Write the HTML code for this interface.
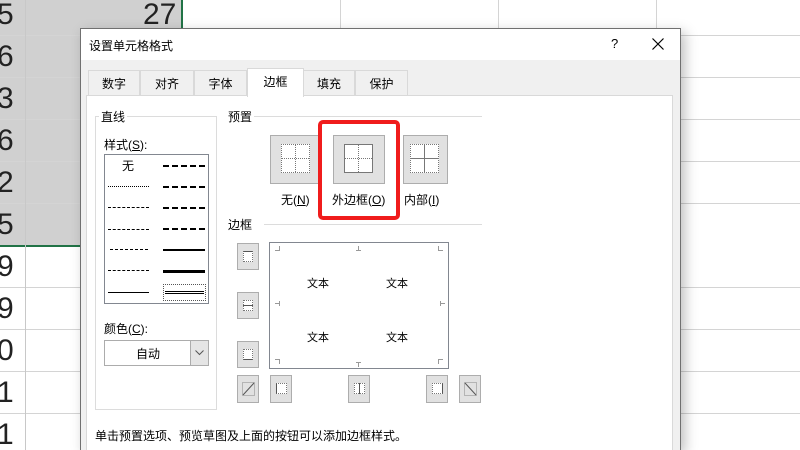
<!DOCTYPE html>
<html style="width:800px;height:450px;overflow:hidden"><head><meta charset="utf-8"><style>
*{margin:0;padding:0;box-sizing:border-box}
body{width:800px;height:450px;overflow:hidden;background:#fff;position:relative;font-family:"Liberation Sans","Noto Sans CJK SC",sans-serif;font-size:12px;color:#000}
.a{position:absolute}
.hl{position:absolute;left:0;width:800px;height:1px;background:#d4d4d4}
.num{position:absolute;font-size:30px;color:#222;line-height:42px}
.btn{position:absolute;background:#e1e1e1;border:1px solid #adadad}
.dot{position:absolute;border:1px dotted #777;background:#fff}
.lst{position:absolute;height:0}
.cm{position:absolute;width:5px;height:5px;border-color:#999;border-style:solid;border-width:0}
</style></head><body>
<div class="a" style="left:0;top:0;width:182px;height:246px;background:#d0d0d0"></div>
<div class="hl" style="top:35px"></div><div class="hl" style="top:77px"></div><div class="hl" style="top:119px"></div><div class="hl" style="top:161px"></div><div class="hl" style="top:203px"></div>
<div class="hl" style="top:287px"></div><div class="hl" style="top:329px"></div><div class="hl" style="top:371px"></div><div class="hl" style="top:413px"></div>
<div class="a" style="left:0;top:245px;width:182px;height:2px;background:#217346"></div>
<div class="a" style="left:181px;top:0;width:2px;height:247px;background:#217346"></div>
<div class="a" style="left:25px;top:0;width:1px;height:450px;background:#c8c8c8"></div>
<div class="a" style="left:340px;top:0;width:1px;height:30px;background:#d4d4d4"></div>
<div class="a" style="left:498px;top:0;width:1px;height:30px;background:#d4d4d4"></div>
<div class="a" style="left:656px;top:0;width:1px;height:30px;background:#d4d4d4"></div>
<div class="num" style="left:-3px;top:-6px">5</div><div class="num" style="left:-3px;top:36px">6</div><div class="num" style="left:-3px;top:78px">3</div><div class="num" style="left:-3px;top:120px">6</div><div class="num" style="left:-3px;top:162px">2</div><div class="num" style="left:-3px;top:204px">5</div><div class="num" style="left:-3px;top:246px">9</div><div class="num" style="left:-3px;top:288px">9</div><div class="num" style="left:-3px;top:330px">0</div><div class="num" style="left:-3px;top:372px">1</div><div class="num" style="left:-3px;top:414px">1</div>
<div class="num" style="left:143px;top:-6px">27</div>
<div class="a" style="left:80px;top:28px;width:601px;height:422px;background:#f0f0f0;border:1px solid #707070;border-bottom:none;box-shadow:4px 4px 12px rgba(0,0,0,.25)">
<div class="a" style="left:0;top:0;width:599px;height:31px;background:#fff"></div>
<div class="a" style="left:8px;top:8px;font-size:12px">设置单元格格式</div>
<div class="a" style="left:530px;top:7px;font-size:13px">?</div>
<svg class="a" style="left:571px;top:9px" width="12" height="12"><path d="M0.5 0.5L11.5 11.5M11.5 0.5L0.5 11.5" stroke="#000" stroke-width="1.2"/></svg>
</div>
<div class="a" style="left:88px;top:70px;width:52px;height:26px;border:1px solid #d9d9d9;border-bottom:none;text-align:center;line-height:26px;font-size:12px">数字</div>
<div class="a" style="left:140px;top:70px;width:54px;height:26px;border:1px solid #d9d9d9;border-bottom:none;text-align:center;line-height:26px">对齐</div>
<div class="a" style="left:194px;top:70px;width:53px;height:26px;border:1px solid #d9d9d9;border-bottom:none;text-align:center;line-height:26px">字体</div>
<div class="a" style="left:303px;top:70px;width:52px;height:26px;border:1px solid #d9d9d9;border-bottom:none;text-align:center;line-height:26px">填充</div>
<div class="a" style="left:355px;top:70px;width:53px;height:26px;border:1px solid #d9d9d9;border-bottom:none;text-align:center;line-height:26px">保护</div>
<div class="a" style="left:86px;top:95px;width:587px;height:355px;background:#fff;border:1px solid #d9d9d9;border-bottom:none"></div>
<div class="a" style="left:247px;top:68px;width:57px;height:29px;background:#fff;border:1px solid #d9d9d9;border-bottom:none;text-align:center;line-height:27px">边框</div>
<div class="a" style="left:95px;top:116px;width:122px;height:294px;border:1px solid #dcdcdc"></div>
<div class="a" style="left:99px;top:108px;background:#fff;padding:0 2px">直线</div>
<div class="a" style="left:104px;top:136px">样式(<u>S</u>):</div>
<div class="a" style="left:104px;top:154px;width:105px;height:150px;border:1px solid #828790"></div>
<div class="a" style="left:122px;top:157px">无</div>
<div class="lst" style="left:108px;top:186px;width:41px;border-top:1px dotted #000"></div>
<div class="lst" style="left:108px;top:207px;width:41px;border-top:1px dashed #000"></div>
<div class="lst" style="left:108px;top:229px;width:41px;border-top:1px dashed #000"></div>
<div class="lst" style="left:110px;top:249px;width:38px;border-top:1px dashed #000"></div>
<div class="lst" style="left:108px;top:270px;width:41px;border-top:1px dashed #000"></div>
<div class="lst" style="left:108px;top:292px;width:41px;border-top:1px solid #000"></div>
<div class="lst" style="left:163px;top:165px;width:42px;border-top:2px dashed #000"></div>
<div class="lst" style="left:163px;top:186px;width:42px;border-top:2px dashed #000"></div>
<div class="lst" style="left:163px;top:207px;width:42px;border-top:2px dashed #000"></div>
<div class="lst" style="left:163px;top:228px;width:42px;border-top:2px dashed #000"></div>
<div class="lst" style="left:163px;top:249px;width:42px;border-top:2px solid #000"></div>
<div class="lst" style="left:163px;top:270px;width:42px;border-top:3px solid #000"></div>
<div class="a" style="left:163px;top:284px;width:43px;height:17px;border:1px dotted #555"></div>
<div class="lst" style="left:165px;top:291px;width:39px;height:3px;border-top:1px solid #000;border-bottom:1px solid #000"></div>
<div class="a" style="left:104px;top:320px">颜色(<u>C</u>):</div>
<div class="a" style="left:104px;top:340px;width:105px;height:26px;border:1px solid #acacac;background:#fff"></div>
<div class="a" style="left:136px;top:345px">自动</div>
<div class="a" style="left:190px;top:341px;width:18px;height:24px;background:#e5e5e5;border-left:1px solid #acacac"></div>
<svg class="a" style="left:195px;top:350px" width="9" height="6"><path d="M0.5 0.5L4.5 4.5L8.5 0.5" stroke="#555" fill="none"/></svg>
<div class="a" style="left:254px;top:116px;width:228px;height:1px;background:#dcdcdc"></div>
<div class="a" style="left:226px;top:108px;background:#fff;padding:0 2px">预置</div>
<div class="btn" style="left:270px;top:135px;width:50px;height:49px"><div class="dot" style="left:10px;top:8px;width:29px;height:29px"></div><div class="a" style="left:24px;top:9px;height:27px;border-left:1px dotted #777"></div><div class="a" style="left:11px;top:22px;width:27px;border-top:1px dotted #777"></div></div>
<div class="btn" style="left:333px;top:135px;width:52px;height:49px"><div class="a" style="left:10px;top:8px;width:29px;height:29px;border:1px solid #777;background:#fff"></div><div class="a" style="left:24px;top:9px;height:27px;border-left:1px dotted #777"></div><div class="a" style="left:11px;top:22px;width:27px;border-top:1px dotted #777"></div></div>
<div class="btn" style="left:403px;top:135px;width:45px;height:49px"><div class="dot" style="left:6px;top:8px;width:29px;height:29px"></div><div class="a" style="left:20px;top:9px;height:27px;border-left:1px solid #777"></div><div class="a" style="left:7px;top:22px;width:27px;border-top:1px solid #777"></div></div>
<div class="a" style="left:281px;top:191px">无(<u>N</u>)</div>
<div class="a" style="left:332px;top:191px">外边框(<u>O</u>)</div>
<div class="a" style="left:404px;top:191px">内部(<u>I</u>)</div>
<div class="a" style="left:318px;top:120px;width:82px;height:100px;border:4px solid #f01c1c;border-radius:5px"></div>
<div class="a" style="left:264px;top:224px;width:218px;height:1px;background:#dcdcdc"></div>
<div class="a" style="left:226px;top:216px;background:#fff;padding:0 2px">边框</div>
<div class="a" style="left:269px;top:242px;width:180px;height:127px;border:1px solid #828790;background:#fff"></div>
<div class="cm" style="left:275px;top:246px;border-right-width:1px;border-bottom-width:1px"></div>
<div class="cm" style="left:438px;top:246px;border-left-width:1px;border-bottom-width:1px"></div>
<div class="cm" style="left:275px;top:359px;border-right-width:1px;border-top-width:1px"></div>
<div class="cm" style="left:438px;top:359px;border-left-width:1px;border-top-width:1px"></div>
<div class="cm" style="left:356px;top:246px;width:5px;border-bottom-width:1px"></div><div class="cm" style="left:358px;top:246px;width:1px;border-left-width:1px"></div>
<div class="cm" style="left:356px;top:362px;width:5px;border-top-width:1px"></div><div class="cm" style="left:358px;top:362px;width:1px;border-left-width:1px"></div>
<div class="cm" style="left:275px;top:303px;height:1px;border-top-width:1px"></div><div class="cm" style="left:279px;top:301px;width:1px;border-left-width:1px"></div>
<div class="cm" style="left:440px;top:303px;height:1px;border-top-width:1px"></div><div class="cm" style="left:440px;top:301px;width:1px;border-left-width:1px"></div>
<div class="a" style="left:307px;top:275px;font-size:11px">文本</div><div class="a" style="left:386px;top:275px;font-size:11px">文本</div>
<div class="a" style="left:307px;top:329px;font-size:11px">文本</div><div class="a" style="left:386px;top:329px;font-size:11px">文本</div>
<div class="btn" style="left:237px;top:243px;width:22px;height:27px"><div class="dot" style="left:5px;top:7px;width:10px;height:11px;border-top:1px solid #555"></div></div>
<div class="btn" style="left:237px;top:292px;width:22px;height:27px"><div class="dot" style="left:5px;top:7px;width:10px;height:11px"></div><div class="a" style="left:5px;top:12px;width:10px;border-top:1px solid #555"></div></div>
<div class="btn" style="left:237px;top:341px;width:22px;height:27px"><div class="dot" style="left:5px;top:7px;width:10px;height:11px;border-bottom:1px solid #555"></div></div>
<div class="btn" style="left:237px;top:375px;width:22px;height:28px"><svg class="a" style="left:4px;top:6px" width="13" height="14"><rect x=".5" y=".5" width="12" height="13" fill="none" stroke="#888" stroke-dasharray="1 1"/><line x1="1" y1="13" x2="12" y2="1" stroke="#555"/></svg></div>
<div class="btn" style="left:270px;top:375px;width:22px;height:28px"><div class="dot" style="left:5px;top:7px;width:11px;height:11px;border-left:1px solid #555"></div></div>
<div class="btn" style="left:348px;top:375px;width:22px;height:28px"><div class="dot" style="left:5px;top:7px;width:11px;height:11px"></div><div class="a" style="left:10px;top:7px;height:11px;border-left:1px solid #555"></div></div>
<div class="btn" style="left:426px;top:375px;width:22px;height:28px"><div class="dot" style="left:5px;top:7px;width:11px;height:11px;border-right:1px solid #555"></div></div>
<div class="btn" style="left:459px;top:375px;width:22px;height:28px"><svg class="a" style="left:4px;top:6px" width="13" height="14"><rect x=".5" y=".5" width="12" height="13" fill="none" stroke="#888" stroke-dasharray="1 1"/><line x1="1" y1="1" x2="12" y2="13" stroke="#555"/></svg></div>
<div class="a" style="left:95px;top:427px">单击预置选项、预览草图及上面的按钮可以添加边框样式。</div>
</body></html>
